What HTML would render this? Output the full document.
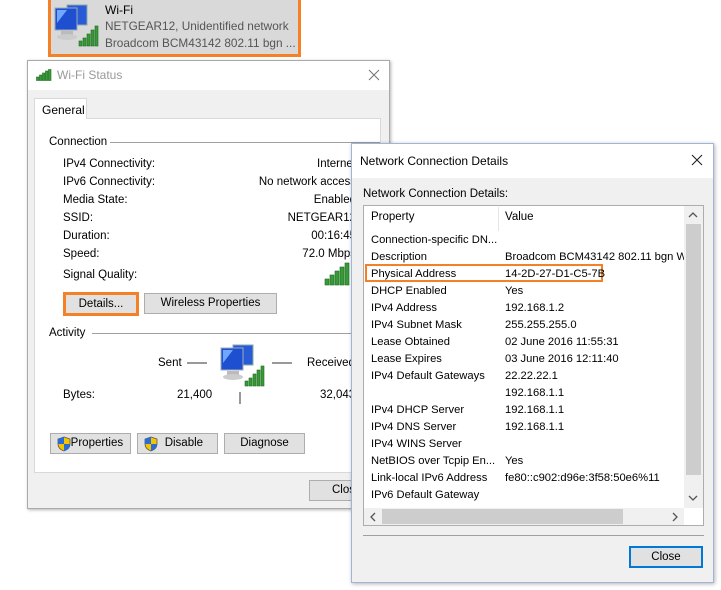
<!DOCTYPE html>
<html><head><meta charset="utf-8"><style>
*{margin:0;padding:0;box-sizing:border-box}
body{width:721px;height:590px;background:#fff;position:relative;overflow:hidden;font-family:"Liberation Sans",sans-serif;font-size:11.5px;color:#000}
.a{position:absolute;white-space:nowrap}
.btn{position:absolute;background:#e1e1e1;border:1px solid #adadad;text-align:center;line-height:18px}
.lst{font-size:11.2px}
</style></head><body>

<!-- top network item -->
<div class="a" style="left:48px;top:0;width:253px;height:57px;background:#d9d9d9;border:3px solid #f58025;border-top:none"></div>
<svg class="a" style="left:53px;top:3px" width="48" height="46" viewBox="0 0 48 46">
<rect x="14" y="2" width="20" height="20" fill="#2a5bd7" stroke="#8aa" />
<rect x="2" y="5" width="22" height="22" fill="#1e4fd0" stroke="#9ab"/>
<polygon points="4,7 14,7 4,20" fill="#6fa8ff"/>
<rect x="8" y="28" width="12" height="4" fill="#bbb"/><ellipse cx="14" cy="34" rx="10" ry="3" fill="#ccc"/>
<g fill="#3a9a3a" stroke="#1d6b1d" stroke-width=".6"><rect x="26" y="38" width="3" height="5"/><rect x="30" y="35" width="3" height="8"/><rect x="34" y="31" width="3" height="12"/><rect x="38" y="27" width="3" height="16"/><rect x="42" y="23" width="3" height="20"/></g></svg>
<div class="a" style="left:105px;top:3px;font-size:12px">Wi-Fi</div>
<div class="a" style="left:105px;top:19px;font-size:11.8px;color:#555">NETGEAR12, Unidentified network</div>
<div class="a" style="left:105px;top:36px;font-size:11.8px;color:#555">Broadcom BCM43142 802.11 bgn ...</div>

<!-- Wi-Fi status window -->
<div class="a" style="left:27px;top:60px;width:363px;height:449px;background:#f0f0f0;border:1px solid #aaa;box-shadow:1px 1px 3px rgba(0,0,0,.3)"></div>
<div class="a" style="left:28px;top:61px;width:361px;height:29px;background:#fff"></div>
<svg class="a" style="left:36px;top:69px" width="16" height="12"><g fill="#3a9a3a" stroke="#1d6b1d" stroke-width=".6"><rect x="0.5" y="8" width="2.5" height="3.5"/><rect x="3.5" y="6" width="2.5" height="5.5"/><rect x="6.5" y="4" width="2.5" height="7.5"/><rect x="9.5" y="2" width="2.5" height="9.5"/><rect x="12.5" y="0.5" width="2.5" height="11"/></g></svg>
<div class="a" style="left:57px;top:68px;font-size:12px;color:#999">Wi-Fi Status</div>
<svg class="a" style="left:368px;top:69px" width="12" height="12"><path d="M1 1L11 11M11 1L1 11" stroke="#777" stroke-width="1.1"/></svg>
<div class="a" style="left:34px;top:118px;width:347px;height:355px;background:#fff;border:1px solid #d9d9d9"></div>
<div class="a" style="left:34px;top:98px;width:53px;height:21px;background:#fff;border:1px solid #d9d9d9;border-bottom:none;padding:4px 0 0 7px;font-size:12px">General</div>
<div class="a" style="left:49px;top:136px">Connection</div>
<div class="a" style="left:110px;top:142px;width:270px;border-top:1px solid #a0a0a0"></div>
<div class="a" style="left:63px;top:155px;line-height:18px">IPv4 Connectivity:<br>IPv6 Connectivity:<br>Media State:<br>SSID:<br>Duration:<br>Speed:</div>
<div class="a" style="left:63px;top:269px">Signal Quality:</div>
<div class="a" style="left:200px;top:155px;width:156px;line-height:18px;text-align:right">Internet<br>No network access<br>Enabled<br>NETGEAR12<br>00:16:45<br>72.0 Mbps</div>
<svg class="a" style="left:324px;top:262px" width="26" height="24"><g fill="#3a9a3a" stroke="#1d6b1d" stroke-width=".6"><rect x="1" y="17" width="4" height="6"/><rect x="6" y="13" width="4" height="10"/><rect x="11" y="9" width="4" height="14"/><rect x="16" y="5" width="4" height="18"/><rect x="21" y="1" width="4" height="22"/></g></svg>
<div class="btn" style="left:63px;top:292px;width:76px;height:24px;border:3px solid #f58025;line-height:18px">Details...</div>
<div class="btn" style="left:144px;top:293px;width:133px;height:21px">Wireless Properties</div>
<div class="a" style="left:49px;top:327px">Activity</div>
<div class="a" style="left:92px;top:333px;width:290px;border-top:1px solid #a0a0a0"></div>
<div class="a" style="left:158px;top:357px">Sent</div>
<div class="a" style="left:187px;top:362px;width:20px;border-top:2px solid #999"></div>
<svg class="a" style="left:218px;top:343px" width="50" height="46" viewBox="0 0 48 46">
<rect x="14" y="2" width="20" height="20" fill="#2a5bd7" stroke="#8aa"/>
<rect x="2" y="5" width="22" height="22" fill="#1e4fd0" stroke="#9ab"/>
<polygon points="4,7 14,7 4,20" fill="#6fa8ff"/>
<rect x="8" y="28" width="12" height="4" fill="#bbb"/><ellipse cx="14" cy="34" rx="10" ry="3" fill="#ccc"/>
<g fill="#3a9a3a" stroke="#1d6b1d" stroke-width=".6"><rect x="26" y="38" width="3" height="5"/><rect x="30" y="35" width="3" height="8"/><rect x="34" y="31" width="3" height="12"/><rect x="38" y="27" width="3" height="16"/><rect x="42" y="23" width="3" height="20"/></g></svg>
<div class="a" style="left:272px;top:362px;width:20px;border-top:2px solid #999"></div>
<div class="a" style="left:307px;top:357px">Received</div>
<div class="a" style="left:63px;top:389px">Bytes:</div>
<div class="a" style="left:177px;top:389px">21,400</div>
<div class="a" style="left:239px;top:392px;height:12px;border-left:2px solid #999"></div>
<div class="a" style="left:320px;top:389px">32,043</div>
<div class="btn" style="left:50px;top:433px;width:81px;height:21px">&nbsp;&nbsp;&nbsp;&nbsp;Properties</div>
<div class="btn" style="left:137px;top:433px;width:81px;height:21px">&nbsp;&nbsp;&nbsp;&nbsp;Disable</div>
<div class="btn" style="left:224px;top:433px;width:81px;height:21px">Diagnose</div>
<svg class="a" style="left:57px;top:436px" width="14" height="16"><path d="M7 1 L13 3 L13 8 Q13 13 7 15 Q1 13 1 8 L1 3 Z" fill="#f5c400" stroke="#555" stroke-width=".8"/><path d="M7 1 L7 8 L1 8 L1 3Z M7 8 L13 8 Q13 13 7 15Z" fill="#2b6bd6"/></svg>
<svg class="a" style="left:144px;top:436px" width="14" height="16"><path d="M7 1 L13 3 L13 8 Q13 13 7 15 Q1 13 1 8 L1 3 Z" fill="#f5c400" stroke="#555" stroke-width=".8"/><path d="M7 1 L7 8 L1 8 L1 3Z M7 8 L13 8 Q13 13 7 15Z" fill="#2b6bd6"/></svg>
<div class="btn" style="left:309px;top:480px;width:60px;height:21px;text-align:left;padding-left:22px">Close</div>

<!-- Details window -->
<div class="a" style="left:351px;top:143px;width:363px;height:440px;background:#f0f0f0;border:1px solid #9fb4d8;box-shadow:1px 1px 4px rgba(0,0,0,.3)"></div>
<div class="a" style="left:352px;top:144px;width:361px;height:34px;background:#fff"></div>
<div class="a" style="left:360px;top:154px;font-size:12px">Network Connection Details</div>
<svg class="a" style="left:691px;top:154px" width="12" height="12"><path d="M1 1L11 11M11 1L1 11" stroke="#222" stroke-width="1.1"/></svg>
<div class="a" style="left:363px;top:188px">Network Connection Details:</div>
<div class="a" style="left:363px;top:205px;width:341px;height:321px;background:#fff;border:1px solid #adadad"></div>
<div class="a" style="left:498px;top:207px;height:24px;border-left:1px solid #e5e5e5"></div>
<div class="a" style="left:371px;top:211px">Property</div>
<div class="a" style="left:505px;top:211px">Value</div>
<div class="a" style="left:365px;top:264px;width:238px;height:18px;border:2px solid #f58025"></div>
<div class="a lst" style="left:371px;top:232px;line-height:17px;width:128px;overflow:hidden">Connection-specific DN...<br>Description<br>Physical Address<br>DHCP Enabled<br>IPv4 Address<br>IPv4 Subnet Mask<br>Lease Obtained<br>Lease Expires<br>IPv4 Default Gateways<br>&nbsp;<br>IPv4 DHCP Server<br>IPv4 DNS Server<br>IPv4 WINS Server<br>NetBIOS over Tcpip En...<br>Link-local IPv6 Address<br>IPv6 Default Gateway</div>
<div class="a lst" style="left:505px;top:232px;line-height:17px;width:179px;overflow:hidden">&nbsp;<br>Broadcom BCM43142 802.11 bgn Wi-Fi<br>14-2D-27-D1-C5-7B<br>Yes<br>192.168.1.2<br>255.255.255.0<br>02 June 2016 11:55:31<br>03 June 2016 12:11:40<br>22.22.22.1<br>192.168.1.1<br>192.168.1.1<br>192.168.1.1<br>&nbsp;<br>Yes<br>fe80::c902:d96e:3f58:50e6%11</div>
<!-- v scrollbar -->
<div class="a" style="left:684px;top:206px;width:19px;height:302px;background:#f0f0f0"></div>
<div class="a" style="left:686px;top:224px;width:15px;height:251px;background:#cdcdcd"></div>
<svg class="a" style="left:688px;top:211px" width="10" height="8"><path d="M1 6L5 2L9 6" stroke="#555" stroke-width="1.3" fill="none"/></svg>
<svg class="a" style="left:688px;top:494px" width="10" height="8"><path d="M1 2L5 6L9 2" stroke="#555" stroke-width="1.3" fill="none"/></svg>
<!-- h scrollbar -->
<div class="a" style="left:364px;top:508px;width:320px;height:17px;background:#f0f0f0"></div>
<div class="a" style="left:382px;top:509px;width:241px;height:15px;background:#cdcdcd"></div>
<svg class="a" style="left:369px;top:512px" width="8" height="10"><path d="M6 1L2 5L6 9" stroke="#555" stroke-width="1.3" fill="none"/></svg>
<svg class="a" style="left:671px;top:512px" width="8" height="10"><path d="M2 1L6 5L2 9" stroke="#555" stroke-width="1.3" fill="none"/></svg>
<div class="a" style="left:363px;top:535px;width:341px;border-top:1px solid #a0a0a0"></div>
<div class="btn" style="left:629px;top:546px;width:74px;height:22px;border:2px solid #0078d7;line-height:18px">Close</div>
</body></html>
